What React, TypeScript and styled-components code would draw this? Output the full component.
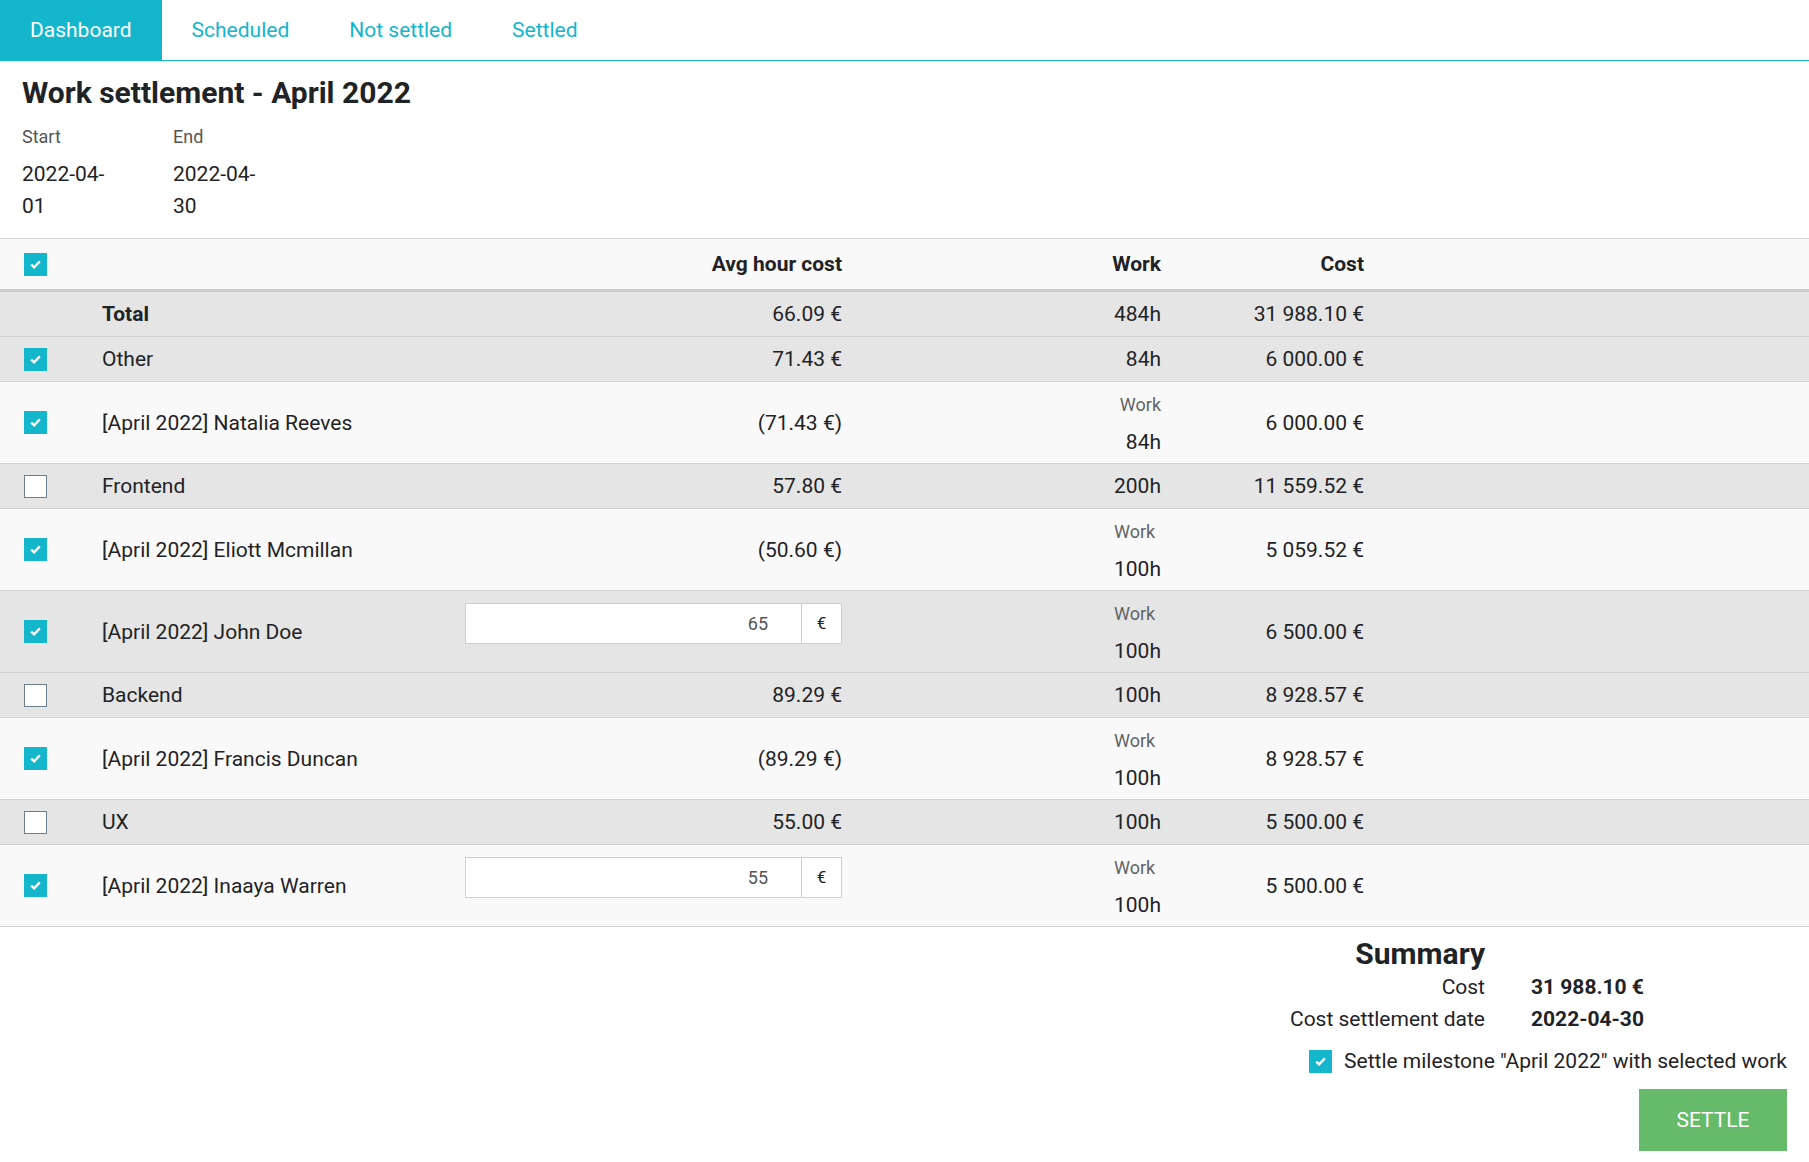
import React from 'react';
import styled, { createGlobalStyle } from 'styled-components';

const CYAN = '#13b6cb';

const GlobalStyle = createGlobalStyle`
    body {
        margin: 0;
        background: #fff;
        color: #1f2326;
        font-family: Roboto, "Liberation Sans", Arial, sans-serif;
    }
    * {
        box-sizing: border-box;
    }
`;

const TabBar = styled.nav`
    display: flex;
    height: 61px;
    border-bottom: 1px solid ${CYAN};
`;

const Tab = styled.a<{ $active?: boolean }>`
    display: flex;
    align-items: center;
    padding: 0 30px;
    font-size: 21px;
    cursor: pointer;
    color: ${(p) => (p.$active ? '#fff' : CYAN)};
    background: ${(p) => (p.$active ? CYAN : 'transparent')};
`;

const Head = styled.header`
    padding: 0 22px;
`;

const Title = styled.h1`
    margin: 13px 0 0;
    font-size: 30px;
    line-height: 38px;
    font-weight: 700;
`;

const Meta = styled.div`
    display: flex;
    gap: 55px;
    margin-top: 14px;
`;

const MetaField = styled.div`
    width: 96px;
`;

const MetaLabel = styled.div`
    font-size: 18px;
    line-height: 22px;
    color: #555;
`;

const MetaValue = styled.div`
    margin-top: 10px;
    font-size: 21px;
    line-height: 32px;
`;

const Table = styled.div`
    margin-top: 16px;
`;

type RowKind = 'head' | 'group' | 'person' | 'hover';

const Row = styled.div<{ $kind: RowKind }>`
    display: grid;
    grid-template-columns: 102px 363px 377px 319px 203px 1fr;
    align-items: center;
    font-size: 21px;
    min-height: ${(p) => (p.$kind === 'head' ? 54 : p.$kind === 'group' ? 45 : 82)}px;
    background: ${(p) => (p.$kind === 'head' || p.$kind === 'person' ? '#f9f9f9' : '#e5e5e5')};
    border-top: ${(p) => (p.$kind === 'head' ? '1px solid #d6d6d6' : 'none')};
    border-bottom: ${(p) => (p.$kind === 'head' ? '3px solid #cbcbcb' : '1px solid #d2d2d2')};
    font-weight: ${(p) => (p.$kind === 'head' ? 700 : 400)};
`;

const CheckCell = styled.div`
    padding-left: 24px;
    display: flex;
    align-items: center;
`;

const NameCell = styled.div<{ $bold?: boolean }>`
    font-weight: ${(p) => (p.$bold ? 700 : 'inherit')};
`;

const NumCell = styled.div`
    text-align: right;
`;

const InputCell = styled.div`
    align-self: start;
    margin-top: 12px;
    display: flex;
    height: 41px;
`;

const PriceInput = styled.div`
    flex: 1;
    background: #fff;
    border: 1px solid #cfcfcf;
    border-right: none;
    display: flex;
    align-items: center;
    justify-content: flex-end;
    padding-right: 33px;
    font-size: 18px;
    color: #555;
`;

const Addon = styled.div`
    width: 41px;
    background: #fff;
    border: 1px solid #cfcfcf;
    display: flex;
    align-items: center;
    justify-content: center;
    font-size: 17px;
    padding-bottom: 2px;
`;

const WorkStack = styled.div`
    display: inline-flex;
    flex-direction: column;
`;

const WorkLabel = styled.span`
    text-align: left;
    font-size: 18px;
    line-height: 24px;
    color: #5f6468;
`;

const WorkValue = styled.span`
    text-align: right;
    line-height: 24px;
    margin-top: 13px;
`;

const Box = styled.span<{ $checked?: boolean }>`
    width: 23px;
    height: 23px;
    display: inline-flex;
    align-items: center;
    justify-content: center;
    flex: none;
    background: ${(p) => (p.$checked ? CYAN : '#fff')};
    border: ${(p) => (p.$checked ? 'none' : '1px solid #6c7f8e')};
`;

function Checkbox({ checked }: { checked?: boolean }) {
    return (
        <Box $checked={checked}>
            {checked && (
                <svg width="11" height="9" viewBox="0 0 11 9" aria-hidden="true">
                    <path d="M1.2 4.6 L4.1 7.3 L9.8 1.4" fill="none" stroke="#fff" strokeWidth="2.4" />
                </svg>
            )}
        </Box>
    );
}

const SummaryArea = styled.section`
    display: flex;
    flex-direction: column;
    align-items: flex-end;
    padding: 10px 22px 12px;
`;

const SummaryGrid = styled.div`
    display: grid;
    grid-template-columns: auto 256px;
    column-gap: 46px;
    align-items: baseline;
`;

const SummaryTitle = styled.h2`
    margin: 0;
    grid-column: 1;
    text-align: right;
    font-size: 30px;
    line-height: 34px;
    font-weight: 700;
`;

const SumLabel = styled.div`
    grid-column: 1;
    text-align: right;
    font-size: 21px;
    line-height: 32px;
`;

const SumValue = styled.div`
    font-size: 21px;
    font-weight: 700;
`;

const SettleLine = styled.label`
    display: flex;
    align-items: center;
    gap: 12px;
    margin-top: 14px;
    font-size: 21px;
`;

const SettleButton = styled.button`
    margin-top: 16px;
    width: 148px;
    height: 62px;
    border: none;
    background: #66bb6a;
    color: #fff;
    font-family: inherit;
    font-size: 21px;
    text-transform: uppercase;
`;

type Item =
    | { kind: 'group'; name: string; checked?: boolean; bold?: boolean; noBox?: boolean; avg: string; work: string; cost: string }
    | { kind: 'person'; name: string; checked: boolean; avg?: string; rate?: string; work: string; cost: string; hover?: boolean };

const items: Item[] = [
    { kind: 'group', name: 'Total', bold: true, noBox: true, avg: '66.09 €', work: '484h', cost: '31 988.10 €' },
    { kind: 'group', name: 'Other', checked: true, avg: '71.43 €', work: '84h', cost: '6 000.00 €' },
    { kind: 'person', name: '[April 2022] Natalia Reeves', checked: true, avg: '(71.43 €)', work: '84h', cost: '6 000.00 €' },
    { kind: 'group', name: 'Frontend', checked: false, avg: '57.80 €', work: '200h', cost: '11 559.52 €' },
    { kind: 'person', name: '[April 2022] Eliott Mcmillan', checked: true, avg: '(50.60 €)', work: '100h', cost: '5 059.52 €' },
    { kind: 'person', name: '[April 2022] John Doe', checked: true, rate: '65', work: '100h', cost: '6 500.00 €', hover: true },
    { kind: 'group', name: 'Backend', checked: false, avg: '89.29 €', work: '100h', cost: '8 928.57 €' },
    { kind: 'person', name: '[April 2022] Francis Duncan', checked: true, avg: '(89.29 €)', work: '100h', cost: '8 928.57 €' },
    { kind: 'group', name: 'UX', checked: false, avg: '55.00 €', work: '100h', cost: '5 500.00 €' },
    { kind: 'person', name: '[April 2022] Inaaya Warren', checked: true, rate: '55', work: '100h', cost: '5 500.00 €' },
];

function ItemRow({ item }: { item: Item }) {
    if (item.kind === 'group') {
        return (
            <Row $kind="group">
                <CheckCell>{!item.noBox && <Checkbox checked={item.checked} />}</CheckCell>
                <NameCell $bold={item.bold}>{item.name}</NameCell>
                <NumCell>{item.avg}</NumCell>
                <NumCell>{item.work}</NumCell>
                <NumCell>{item.cost}</NumCell>
                <div />
            </Row>
        );
    }
    return (
        <Row $kind={item.hover ? 'hover' : 'person'}>
            <CheckCell>
                <Checkbox checked={item.checked} />
            </CheckCell>
            <NameCell>{item.name}</NameCell>
            {item.rate ? (
                <InputCell>
                    <PriceInput>{item.rate}</PriceInput>
                    <Addon>€</Addon>
                </InputCell>
            ) : (
                <NumCell>{item.avg}</NumCell>
            )}
            <NumCell>
                <WorkStack>
                    <WorkLabel>Work</WorkLabel>
                    <WorkValue>{item.work}</WorkValue>
                </WorkStack>
            </NumCell>
            <NumCell>{item.cost}</NumCell>
            <div />
        </Row>
    );
}

export default function App() {
    return (
        <>
            <GlobalStyle />
            <TabBar>
                <Tab $active>Dashboard</Tab>
                <Tab>Scheduled</Tab>
                <Tab>Not settled</Tab>
                <Tab>Settled</Tab>
            </TabBar>

            <Head>
                <Title>Work settlement - April 2022</Title>
                <Meta>
                    <MetaField>
                        <MetaLabel>Start</MetaLabel>
                        <MetaValue>2022-04-01</MetaValue>
                    </MetaField>
                    <MetaField>
                        <MetaLabel>End</MetaLabel>
                        <MetaValue>2022-04-30</MetaValue>
                    </MetaField>
                </Meta>
            </Head>

            <Table>
                <Row $kind="head">
                    <CheckCell>
                        <Checkbox checked />
                    </CheckCell>
                    <div />
                    <NumCell>Avg hour cost</NumCell>
                    <NumCell>Work</NumCell>
                    <NumCell>Cost</NumCell>
                    <div />
                </Row>
                {items.map((item) => (
                    <ItemRow key={item.name} item={item} />
                ))}
            </Table>

            <SummaryArea>
                <SummaryGrid>
                    <SummaryTitle>Summary</SummaryTitle>
                    <SumLabel>Cost</SumLabel>
                    <SumValue>31 988.10 €</SumValue>
                    <SumLabel>Cost settlement date</SumLabel>
                    <SumValue>2022-04-30</SumValue>
                </SummaryGrid>
                <SettleLine>
                    <Checkbox checked />
                    Settle milestone "April 2022" with selected work
                </SettleLine>
                <SettleButton type="button">Settle</SettleButton>
            </SummaryArea>
        </>
    );
}
